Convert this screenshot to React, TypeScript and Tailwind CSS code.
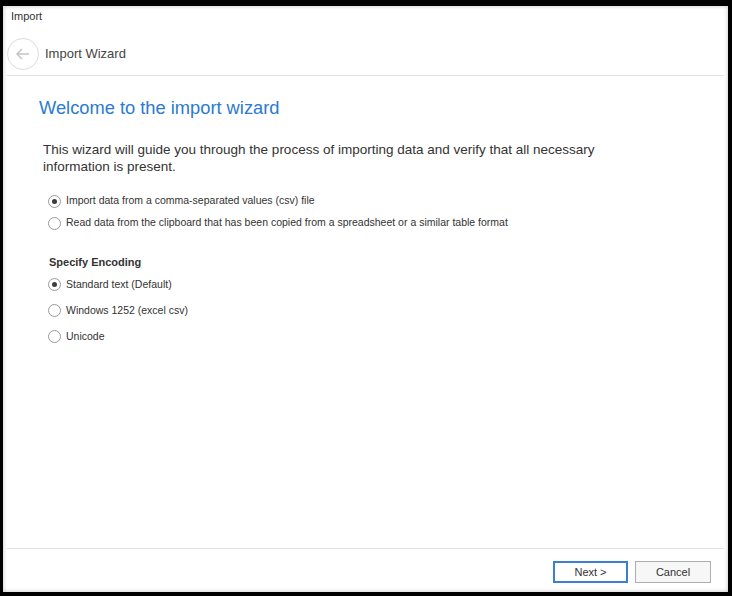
import { useState } from 'react';

const ui = { fontFamily: '"Liberation Sans", Arial, sans-serif' };
const tahoma = { fontFamily: '"Liberation Sans", Tahoma, sans-serif' };

function Radio({
  label,
  checked,
  onSelect,
}: {
  label: string;
  checked: boolean;
  onSelect: () => void;
}) {
  return (
    <button
      onClick={onSelect}
      className="flex items-center gap-[5px] text-left h-[22px]"
    >
      <span className="w-[13px] h-[13px] rounded-full border border-[#9a9a9a] bg-white flex items-center justify-center">
        {checked && <span className="w-[5px] h-[5px] rounded-full bg-[#3c3c3c]" />}
      </span>
      <span className="text-[10.5px] text-[#333]" style={tahoma}>
        {label}
      </span>
    </button>
  );
}

export default function App() {
  const [source, setSource] = useState('csv');
  const [encoding, setEncoding] = useState('standard');

  return (
    <div className="h-screen bg-black pl-[3px] pt-[6px] pr-[4px] pb-[4px]" style={ui}>
      <div className="h-full bg-white flex flex-col shadow-[inset_0_0_4px_rgba(0,0,0,0.25)]">
        {/* Window title */}
        <div className="h-[20px] leading-[20px] pl-[8px] text-[11px] text-[#333]">Import</div>

        {/* Header with back button */}
        <div className="flex items-center pt-[12px] pb-[5px] border-b border-[#e3e3e3] mx-[4px]">
          <button className="w-[32px] h-[32px] rounded-full border border-[#dcdcdc] flex items-center justify-center">
            <svg width="18" height="18" viewBox="0 0 18 18" fill="none" stroke="#c4c4c4" strokeWidth="1.5">
              <path d="M15 9H3M8 4L3 9l5 5" />
            </svg>
          </button>
          <span className="ml-[6px] text-[13px] text-[#444]">Import Wizard</span>
        </div>

        {/* Content */}
        <div className="flex-1 pl-[36px] pt-[20px]">
          <h1 className="text-[18.3px] text-[#2b7bd0] leading-[24px]">Welcome to the import wizard</h1>

          <p className="mt-[21px] ml-[4px] text-[13.5px] leading-[17px] text-[#333] max-w-[600px]">
            This wizard will guide you through the process of importing data and verify that all necessary
            information is present.
          </p>

          <div className="mt-[15px] ml-[9px] flex flex-col">
            <Radio
              label="Import data from a comma-separated values (csv) file"
              checked={source === 'csv'}
              onSelect={() => setSource('csv')}
            />
            <Radio
              label="Read data from the clipboard that has been copied from a spreadsheet or a similar table format"
              checked={source === 'clipboard'}
              onSelect={() => setSource('clipboard')}
            />
          </div>

          <div className="mt-[20px] ml-[10px] text-[11px] font-bold text-[#333]" style={tahoma}>
            Specify Encoding
          </div>

          <div className="mt-[3px] ml-[9px] flex flex-col gap-[4px]">
            <Radio
              label="Standard text (Default)"
              checked={encoding === 'standard'}
              onSelect={() => setEncoding('standard')}
            />
            <Radio
              label="Windows 1252 (excel csv)"
              checked={encoding === 'win1252'}
              onSelect={() => setEncoding('win1252')}
            />
            <Radio
              label="Unicode"
              checked={encoding === 'unicode'}
              onSelect={() => setEncoding('unicode')}
            />
          </div>
        </div>

        {/* Footer */}
        <div className="border-t border-[#e3e3e3] mx-[4px] flex justify-end gap-[7px] pt-[12px] pb-[9px] pr-[13px]">
          <button className="w-[75px] h-[22px] border-2 border-[#3d7fcf] bg-white text-[11px] text-[#333]">
            Next &gt;
          </button>
          <button className="w-[76px] h-[22px] border border-[#adadad] bg-[#f7f7f7] text-[11px] text-[#333]">
            Cancel
          </button>
        </div>
      </div>
    </div>
  );
}
